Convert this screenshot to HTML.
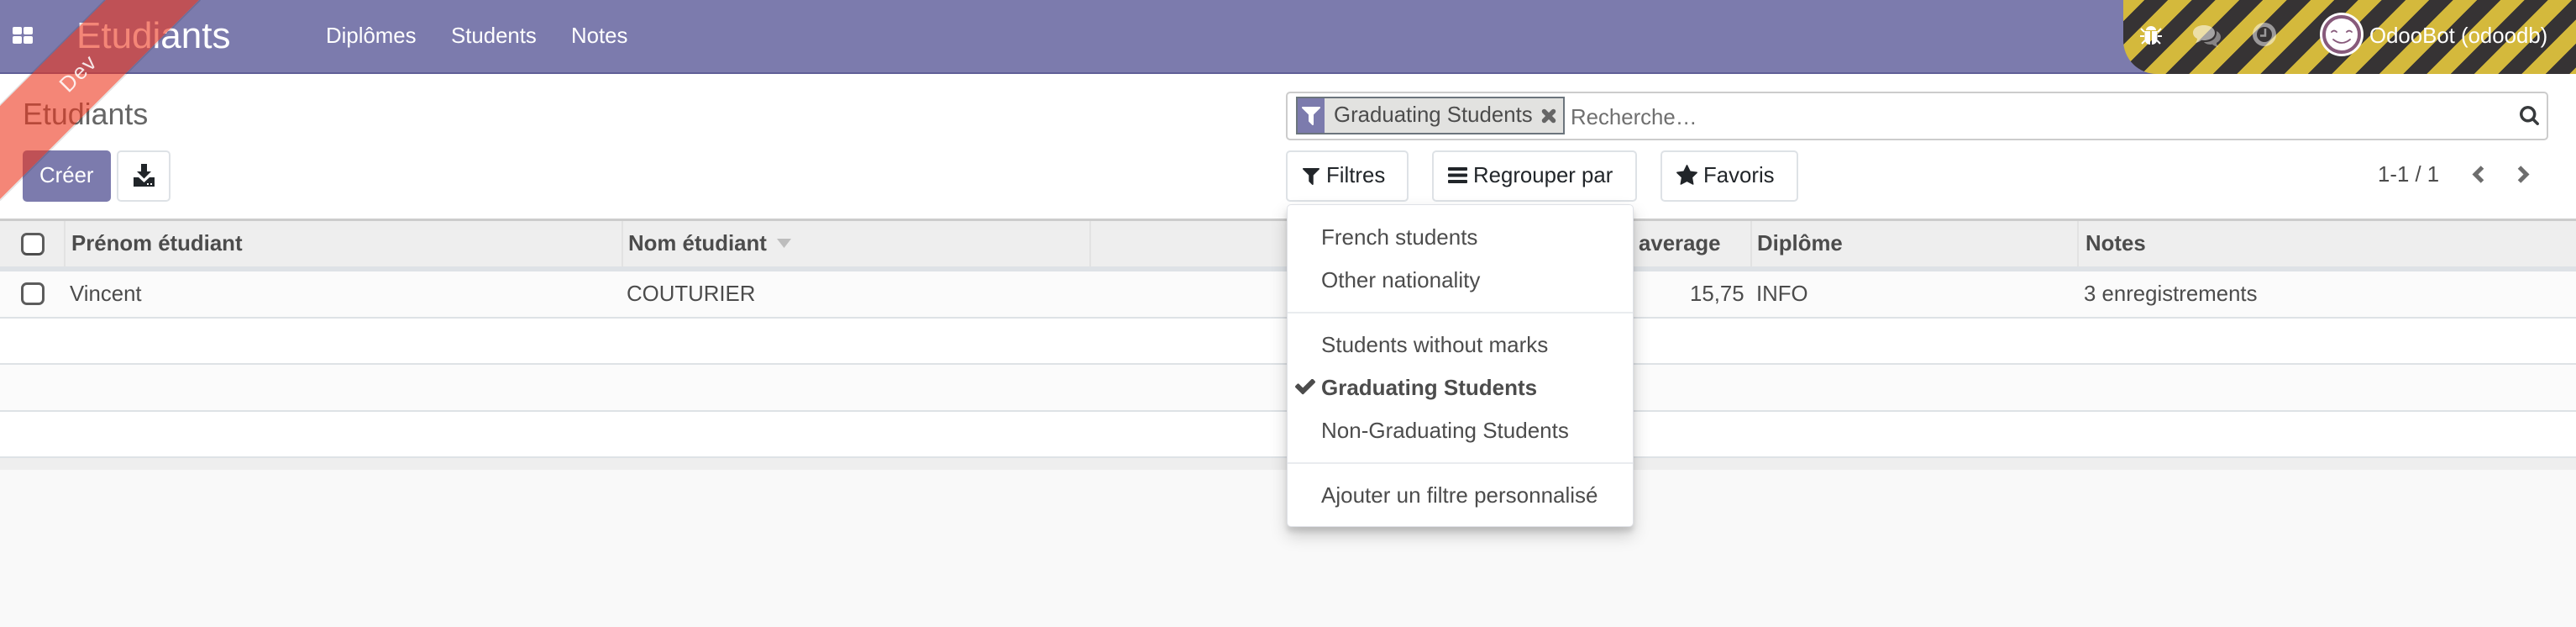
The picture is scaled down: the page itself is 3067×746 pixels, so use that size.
<!DOCTYPE html>
<html lang="fr"><head><meta charset="utf-8"><title>Etudiants</title>
<style>
html,body{margin:0;padding:0;width:3067px;height:746px;overflow:hidden;background:#f9f9f9}
body{position:relative;font-family:"Liberation Sans",sans-serif;font-size:25.8px;color:#4c4c4c}
.a{position:absolute;white-space:nowrap}
.t{position:absolute;white-space:nowrap;line-height:30px;height:30px}
.d{font-size:26px}
svg{position:absolute;display:block}
.btn{position:absolute;box-sizing:border-box;background:#fff;border:2px solid #dee2e6;border-radius:5px}
.line{position:absolute;left:0;width:3067px}
b{font-weight:700}
</style></head><body>
<div class="a" style="left:0;top:88px;width:3067px;height:172px;background:#fff"></div>

<!-- navbar -->
<div class="a" style="left:0;top:0;width:3067px;height:88px;background:#7c7bad;box-sizing:border-box;border-bottom:2px solid #5f5e97"></div>
<svg style="left:14px;top:31px" width="26" height="22" viewBox="0 0 26 22"><g fill="#fff"><rect x="1" y="1" width="11" height="9" rx="2"/><rect x="14" y="1" width="11" height="9" rx="2"/><rect x="1" y="12" width="11" height="9" rx="2"/><rect x="14" y="12" width="11" height="9" rx="2"/></g></svg>
<div class="t" style="left:91px;top:18px;font-size:44px;line-height:50px;height:50px;color:#fff">Etudiants</div>
<div class="t" style="left:388px;top:28px;color:#fff">Diplômes</div>
<div class="t" style="left:537px;top:28px;color:#fff">Students</div>
<div class="t" style="left:680px;top:28px;color:#fff">Notes</div>

<!-- striped systray -->
<div class="a" style="left:2528px;top:0;width:539px;height:88px;border-bottom-left-radius:40px;background:repeating-linear-gradient(135deg,#d4b93c -2.3px,#d4b93c 17.7px,#363334 17.7px,#363334 37.7px)"></div>
<svg style="left:2548px;top:30px" width="26" height="24" viewBox="0 0 26 24"><g fill="#fff"><path d="M7 6a6 5 0 0 1 12 0z"/><path d="M5.500 7h6.500v16c-4 0-6.500-3-6.500-7zM14 7h6.500v9c0 4-2.500 7-6.500 7z"/></g><g stroke="#fff" stroke-width="2" fill="none"><path d="M5 8 1 4M21 8l4-4M5 13H0M21 13h5M6 18l-4 4M20 18l4 4"/></g></svg>
<svg style="left:2611px;top:30px" width="34" height="30" viewBox="0 0 34 30"><path d="M13 0c7 0 13 3.500 13 9s-6 9-13 9c-1 0-2 0-3-.2-2 1.700-4 2.700-7 3.200 1-1.500 2-3 2-5C2 14.500 0 12 0 9c0-5.500 6-9 13-9z" fill="#fff" opacity=".55"/><path d="M28 7c3 1.500 5 4 5 7 0 3-2 5.500-5 7 0 2 1 3.500 2 5-3-.5-5-1.500-7-3.200-3.500.6-8-.3-10-2.800 8 .5 16-3 15-13z" fill="#fff" opacity=".4"/></svg>
<svg style="left:2682px;top:27px" width="28" height="28" viewBox="0 0 28 28"><circle cx="14" cy="14" r="11.500" fill="none" stroke="#fff" stroke-opacity=".5" stroke-width="5"/><path d="M15 7v8.500H9" fill="none" stroke="#fff" stroke-opacity=".5" stroke-width="2.500"/></svg>
<svg style="left:2762px;top:15px" width="52" height="52" viewBox="0 0 52 52"><circle cx="26" cy="26" r="26" fill="#fff"/><circle cx="26" cy="26" r="21" fill="#fff" stroke="#875a7b" stroke-width="4"/><path d="M14 23q3-3 6 0M32 23q3-3 6 0M16 32q10 8 20 0" fill="none" stroke="#875a7b" stroke-width="1.800" stroke-linecap="round"/></svg>
<div class="t" style="left:2821px;top:28px;color:#fff">OdooBot (odoodb)</div>

<!-- control panel -->
<div class="t" style="left:27px;top:115px;font-size:35.800px;line-height:42px;height:42px;color:#666">Etudiants</div>
<div class="a" style="left:27px;top:179px;width:105px;height:61px;background:#7c7bad;border-radius:5px"></div>
<div class="t" style="left:47px;top:194px;color:#fff">Créer</div>
<div class="btn" style="left:139px;top:179px;width:64px;height:61px"></div>
<svg style="left:159px;top:195px" width="25" height="28" viewBox="0 0 25 28"><path d="M9 0h7v9h5l-8.500 8.500L4 9h5z" fill="#212529"/><path d="M0 16h6l6.500 6 6.500-6h6v11H0z" fill="#212529"/><rect x="16" y="23" width="2" height="2" fill="#fff"/><rect x="20" y="23" width="2" height="2" fill="#fff"/></svg>

<!-- search -->
<div class="a" style="left:1531px;top:109px;width:1503px;height:58px;box-sizing:border-box;border:2px solid #ccc;border-radius:5px;background:#fff"></div>
<div class="a" style="left:1543px;top:115px;width:320px;height:45px;box-sizing:border-box;border:2px solid #6c757d;background:#e2e2e0"></div>
<div class="a" style="left:1545px;top:117px;width:32px;height:41px;background:#7c7bad"></div>
<svg style="left:1550px;top:127px" width="22" height="22" viewBox="0 0 1408 1408"><path d="M1403 39q17 41-14 70l-493 493v742q0 42-39 59-13 5-25 5-27 0-45-19l-256-256q-19-19-19-45v-486L19 109q-31-29-14-70Q22 0 64 0h1280q42 0 59 39z" fill="#fff"/></svg>
<div class="t" style="left:1588px;top:122px">Graduating Students</div>
<svg style="left:1835px;top:129px" width="18" height="18" viewBox="0 0 18 18"><path d="M3.500 3.500l11 11M14.500 3.500l-11 11" fill="none" stroke="#666" stroke-width="5.500" stroke-linecap="round"/></svg>
<div class="t" style="left:1870px;top:125px;color:#6f6f6f">Recherche…</div>
<svg style="left:3000px;top:126px" width="23" height="23" viewBox="0 0 1664 1664"><path d="M1152 704q0-185-131.500-316.500T704 256 387.500 387.500 256 704t131.500 316.500T704 1152t316.500-131.500T1152 704zm512 832q0 52-38 90t-90 38q-54 0-90-38l-343-342q-179 124-399 124-143 0-273.500-55.500t-225-150-150-225T0 704t55.500-273.500 150-225 225-150T704 0t273.500 55.500 225 150 150 225T1408 704q0 220-124 399l343 343q37 37 37 90z" fill="#373a3c"/></svg>

<!-- search buttons -->
<div class="btn" style="left:1531px;top:179px;width:146px;height:61px"></div>
<svg style="left:1551px;top:199px" width="20" height="22" viewBox="0 0 1408 1408"><path d="M1403 39q17 41-14 70l-493 493v742q0 42-39 59-13 5-25 5-27 0-45-19l-256-256q-19-19-19-45v-486L19 109q-31-29-14-70Q22 0 64 0h1280q42 0 59 39z" fill="#212529"/></svg>
<div class="t" style="left:1579px;top:194px;color:#212529">Filtres</div>
<div class="btn" style="left:1705px;top:179px;width:244px;height:61px"></div>
<svg style="left:1724px;top:199px" width="23" height="19" viewBox="0 0 23 19"><g fill="#212529"><rect width="23" height="4" rx="1"/><rect y="7.500" width="23" height="4" rx="1"/><rect y="15" width="23" height="4" rx="1"/></g></svg>
<div class="t" style="left:1754px;top:194px;color:#212529">Regrouper par</div>
<div class="btn" style="left:1977px;top:179px;width:164px;height:61px"></div>
<svg style="left:1996px;top:196px" width="25" height="24" viewBox="0 0 1664 1600"><path d="M1664 647q0 22-26 48l-363 354 86 500q1 7 1 20 0 21-10.500 35.500T1321 1619q-19 0-40-12l-449-236-449 236q-22 12-40 12-21 0-31.500-14.500T301 1569q0-6 2-20l86-500L25 695Q0 668 0 647q0-37 56-46l502-73L783 73q19-41 49-41t49 41l225 455 502 73q56 9 55 46z" transform="translate(0 -32)" fill="#212529"/></svg>
<div class="t" style="left:2028px;top:194px;color:#212529">Favoris</div>

<!-- pager -->
<div class="t" style="left:2831px;top:193px">1-1 / 1</div>
<svg style="left:2941px;top:196px" width="18" height="24" viewBox="0 0 18 24"><path d="M14.500 3 6 11.500l8.500 8.500" fill="none" stroke="#6d6d6d" stroke-width="5"/></svg>
<svg style="left:2996px;top:196px" width="18" height="24" viewBox="0 0 18 24"><path d="M3.500 3 12 11.500 3.500 20" fill="none" stroke="#6d6d6d" stroke-width="5"/></svg>

<!-- table -->
<div class="line" style="top:260px;height:3px;background:#ccc"></div>
<div class="line" style="top:263px;height:54px;background:#eee"></div>
<div class="line" style="top:317px;height:6px;background:#dee2e6"></div>
<div class="line" style="top:323px;height:54px;background:#fbfbfb"></div>
<div class="line" style="top:377px;height:2px;background:#dee2e6"></div>
<div class="line" style="top:379px;height:53px;background:#fff"></div>
<div class="line" style="top:432px;height:2px;background:#dee2e6"></div>
<div class="line" style="top:434px;height:54px;background:#fbfbfb"></div>
<div class="line" style="top:488px;height:2px;background:#dee2e6"></div>
<div class="line" style="top:490px;height:53px;background:#fff"></div>
<div class="line" style="top:543px;height:2px;background:#dee2e6"></div>
<div class="line" style="top:545px;height:14px;background:#eee"></div>
<div class="a" style="left:76px;top:263px;width:2px;height:54px;background:#e2e2e2"></div>
<div class="a" style="left:740px;top:263px;width:2px;height:54px;background:#e2e2e2"></div>
<div class="a" style="left:1297px;top:263px;width:2px;height:54px;background:#e2e2e2"></div>
<div class="a" style="left:2084px;top:263px;width:2px;height:54px;background:#e2e2e2"></div>
<div class="a" style="left:2473px;top:263px;width:2px;height:54px;background:#e2e2e2"></div>

<div class="a" style="left:25px;top:277px;width:28px;height:27px;box-sizing:border-box;border:3px solid #5c5c5c;border-radius:7px;background:#fff;border-bottom-color:#4c4c4c"></div>
<div class="a" style="left:25px;top:336px;width:28px;height:27px;box-sizing:border-box;border:3px solid #5c5c5c;border-radius:7px;background:#fff"></div>
<div class="t" style="left:85px;top:275px"><b>Prénom étudiant</b></div>
<div class="t" style="left:748px;top:275px"><b>Nom étudiant</b></div>
<svg style="left:925px;top:284px" width="17" height="11" viewBox="0 0 17 11"><path d="M0 0h17l-8.500 11z" fill="#bdbdbd"/></svg>
<div class="t" style="left:1951px;top:275px"><b>average</b></div>
<div class="t" style="left:2092px;top:275px"><b>Diplôme</b></div>
<div class="t" style="left:2483px;top:275px"><b>Notes</b></div>
<div class="t" style="left:83px;top:335px">Vincent</div>
<div class="t" style="left:746px;top:335px">COUTURIER</div>
<div class="t" style="left:2012px;top:335px">15,75</div>
<div class="t" style="left:2091px;top:335px">INFO</div>
<div class="t" style="left:2481px;top:335px">3 enregistrements</div>

<!-- dropdown -->
<div class="a" style="left:1532px;top:243px;width:413px;height:384px;box-sizing:border-box;background:#fff;border:1px solid #dfe1e6;border-radius:5px;box-shadow:0 10px 20px rgba(0,0,0,.19),0 6px 6px rgba(0,0,0,.1)"></div>
<div class="a" style="left:1533px;top:371px;width:411px;height:2px;background:#e9ecef"></div>
<div class="a" style="left:1533px;top:550px;width:411px;height:2px;background:#e9ecef"></div>
<div class="t d" style="left:1573px;top:267px">French students</div>
<div class="t d" style="left:1573px;top:318px">Other nationality</div>
<div class="t d" style="left:1573px;top:395px">Students without marks</div>
<svg style="left:1542px;top:451px" width="24" height="20" viewBox="0 0 1550 1290"><path d="M1550 220q0 40-28 68l-724 724-136 136q-28 28-68 28t-68-28l-136-136L28 650Q0 622 0 582t28-68l136-136q28-28 68-28t68 28l294 295L1250 14q28-28 68-28t68 28l136 136q28 28 28 68z" fill="#4c4c4c"/></svg>
<div class="t d" style="left:1573px;top:446px"><b>Graduating Students</b></div>
<div class="t d" style="left:1573px;top:497px">Non-Graduating Students</div>
<div class="t d" style="left:1573px;top:574px">Ajouter un filtre personnalisé</div>

<!-- ribbon -->
<svg style="left:0;top:0" width="260" height="260" viewBox="0 0 260 260"><path d="M125 0 0 125M238.500 0 0 238.500" fill="none" stroke="#000" stroke-opacity=".12" stroke-width="1.500"/><path d="M126 0H237L0 237V126z" fill="#ec351c" fill-opacity=".6"/><text x="0" y="0" transform="translate(93 87) rotate(-45)" text-anchor="middle" dominant-baseline="central" font-family="Liberation Sans, sans-serif" font-size="26" fill="#fff" fill-opacity=".85" letter-spacing="1.500">Dev</text></svg>
</body></html>
